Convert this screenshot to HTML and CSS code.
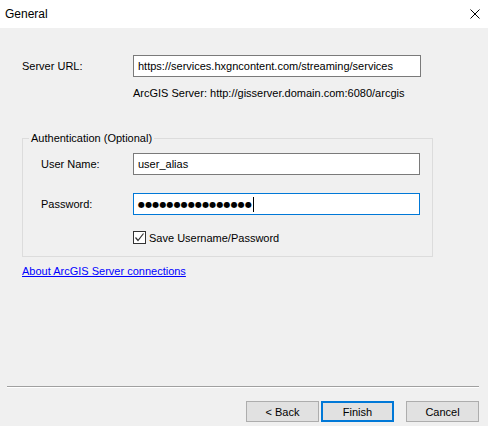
FILE: index.html
```html
<!DOCTYPE html>
<html>
<head>
<meta charset="utf-8">
<link rel="stylesheet" href="styles.css">
</head>
<body>
<div class="dialog">
  <div class="titlebar">
    <span class="title">General</span>
    <svg class="close" width="10" height="10" viewBox="0 0 10 10"><path d="M0.5 0.5 L9.5 9.5 M9.5 0.5 L0.5 9.5" stroke="#000" stroke-width="1" fill="none"/></svg>
  </div>
  <div class="body">
    <div class="row server">
      <label class="lbl">Server URL:</label>
      <div class="input">https://services.hxgncontent.com/streaming/services</div>
    </div>
    <div class="hint">ArcGIS Server: http://gisserver.domain.com:6080/arcgis</div>
    <fieldset class="group">
      <legend>Authentication (Optional)</legend>
      <div class="row user">
        <label class="lbl">User Name:</label>
        <div class="input">user_alias</div>
      </div>
      <div class="row pass">
        <label class="lbl">Password:</label>
        <div class="input focus"><span class="dots">●●●●●●●●●●●●●●●●</span><span class="caret"></span></div>
      </div>
      <div class="check">
        <span class="box"><svg width="11" height="11" viewBox="0 0 11 11"><path d="M1.5 5.5 L4 8.5 L9.5 1.5" stroke="#333" stroke-width="1.2" fill="none"/></svg></span>
        <span>Save Username/Password</span>
      </div>
    </fieldset>
    <a class="link" href="#">About ArcGIS Server connections</a>
  </div>
  <div class="footer">
    <div class="sep"></div>
    <div class="buttons">
      <button class="btn">&lt; Back</button>
      <button class="btn default">Finish</button>
      <button class="btn cancel">Cancel</button>
    </div>
  </div>
</div>
</body>
</html>
```
FILE: styles.css
```css
* { box-sizing: border-box; }
html, body { margin: 0; padding: 0; }
body {
  width: 488px;
  height: 426px;
  background: #f0f0f0;
  font-family: "Liberation Sans", Arial, sans-serif;
  font-size: 11px;
  color: #000;
  overflow: hidden;
}
.dialog { display: flex; flex-direction: column; height: 426px; }
.titlebar {
  height: 28px;
  background: #fff;
  display: flex;
  align-items: center;
  justify-content: space-between;
  padding: 0 8px 0 5px;
}
.title { font-size: 12px; }
.close { display: block; margin-top: -1px; }
.body { padding: 27px 0 0 22px; flex: 1; }
.row { display: grid; grid-template-columns: 111px 288px; align-items: center; }
.input {
  height: 22px;
  background: #fff;
  border: 1px solid #7a7a7a;
  padding: 0 4px;
  display: flex;
  align-items: center;
  white-space: nowrap;
}
.input.focus { border-color: #0078d7; }
.hint { margin: 10px 0 0 111px; height: 16px; }
.group {
  margin: 29px 0 0 0;
  width: 411px;
  height: 125px;
  border: 1px solid #dcdcdc;
  padding: 9px 0 0 18px;
}
.group legend { padding: 0 2px; margin-left: -12px; }
.group .row { grid-template-columns: 92px 287px; }
.pass { margin-top: 18px; }
.dots {
  font-family: "DejaVu Sans", sans-serif;
  font-size: 8px;
  letter-spacing: 0.15px;
}
.caret { display: inline-block; width: 1px; height: 15px; background: #000; margin-left: 1px; }
.check { display: flex; align-items: center; margin: 16px 0 0 92px; gap: 3px; }
.box {
  width: 13px; height: 13px;
  border: 1px solid #333;
  background: #fff;
  display: flex; align-items: center; justify-content: center;
}
.link { display: inline-block; margin-top: 8px; color: #0000ff; }
.footer { padding: 0 9px 4px 7px; }
.sep { height: 2px; border-top: 1px solid #a0a0a0; border-bottom: 1px solid #fff; }
.buttons { display: flex; justify-content: flex-end; margin-top: 13px; gap: 2px; }
.btn {
  width: 73px; height: 21px;
  font: inherit;
  background: #e1e1e1;
  border: 1px solid #adadad;
  padding: 0;
}
.btn.default { border: 2px solid #0078d7; }
.btn.cancel { margin-left: 10px; }
```
